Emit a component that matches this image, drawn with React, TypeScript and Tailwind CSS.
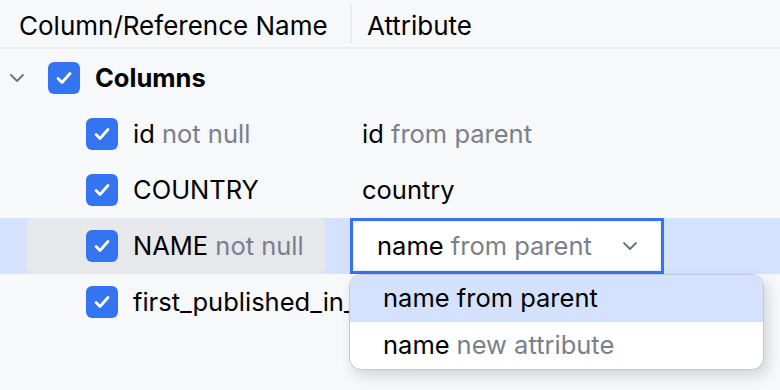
import React from "react";

function Check() {
  return (
    <div className="w-8 h-8 rounded-[6px] bg-[#3574f0] flex items-center justify-center shrink-0">
      <svg width="20" height="20" viewBox="0 0 20 20" fill="none">
        <path d="M4 10.5l4 4L16 5.5" stroke="white" strokeWidth="2.8" strokeLinecap="round" strokeLinejoin="round" />
      </svg>
    </div>
  );
}

function Chevron({ className }: { className?: string }) {
  return (
    <svg width="16" height="10" viewBox="0 0 16 10" fill="none" className={className}>
      <path d="M2 2l6 6 6-6" stroke="#6c707e" strokeWidth="1.8" strokeLinecap="round" strokeLinejoin="round" />
    </svg>
  );
}

const gray = "text-[#7b7f8c]";

export default function App() {
  return (
    <div
      className="w-[780px] h-[390px] bg-[#f7f8fa] text-[25.5px] text-black overflow-hidden relative whitespace-nowrap"
      style={{ fontFamily: "Inter, 'Noto Sans', sans-serif" }}
    >
      {/* header */}
      <div className="h-[49px] flex border-b-2 border-[#ebecf0]">
        <div className="w-[350px] pl-[19px] pt-[3px] flex items-center text-[26px]">Column/Reference Name</div>
        <div className="w-[2px] my-[4px] bg-[#ebecf0]" />
        <div className="pl-[15px] pt-[3px] flex items-center text-[26px]">Attribute</div>
      </div>

      {/* rows */}
      <div className="pt-[1px]">
        <div className="h-[56px] flex items-center">
          <Chevron className="ml-[9px] mr-[23px]" />
          <Check />
          <span className="ml-[15px] font-bold">Columns</span>
        </div>

        <div className="h-[56px] flex items-center">
          <div className="w-[350px] flex items-center pl-[86px]">
            <Check />
            <span className="ml-[15px]">
              id <span className={gray}>not null</span>
            </span>
          </div>
          <div className="pl-[12px]">
            id <span className={gray}>from parent</span>
          </div>
        </div>

        <div className="h-[56px] flex items-center">
          <div className="w-[350px] flex items-center pl-[86px]">
            <Check />
            <span className="ml-[15px]">COUNTRY</span>
          </div>
          <div className="pl-[12px]">country</div>
        </div>

        <div className="h-[56px] flex items-center bg-[#d4e2ff]">
          <div className="w-[350px] h-full pl-[26px] flex">
            <div className="w-[300px] h-full rounded-[7px] bg-[#e7e8ec] flex items-center pl-[60px]">
              <Check />
              <span className="ml-[15px]">
                NAME <span className={gray}>not null</span>
              </span>
            </div>
          </div>
          <div className="w-[314px] h-full border-[3px] border-[#3574f0] p-[1px] bg-[#f4f6fa]">
            <div className="h-full rounded-[6px] bg-white flex items-center pl-[23px] pr-[22px] shadow-[0_0_0_1px_#eceef2]">
              <span>
                name <span className={gray}>from parent</span>
              </span>
              <Chevron className="ml-auto" />
            </div>
          </div>
        </div>

        <div className="h-[56px] flex items-center">
          <div className="flex items-center pl-[86px]">
            <Check />
            <span className="ml-[15px]">first_published_in_year</span>
          </div>
        </div>
      </div>

      {/* popup */}
      <div className="absolute left-[349px] top-[274px] w-[415px] h-[96px] rounded-[12px] border border-[#c4c7cf] bg-white overflow-hidden shadow-[4px_6px_14px_rgba(0,0,0,0.14)]">
        <div className="h-[47px] bg-[#d4e2ff] flex items-center pl-[33px]">name from parent</div>
        <div className="h-[47px] flex items-center pl-[33px]">
          name <span className={`${gray} ml-[7px]`}>new attribute</span>
        </div>
      </div>
    </div>
  );
}
